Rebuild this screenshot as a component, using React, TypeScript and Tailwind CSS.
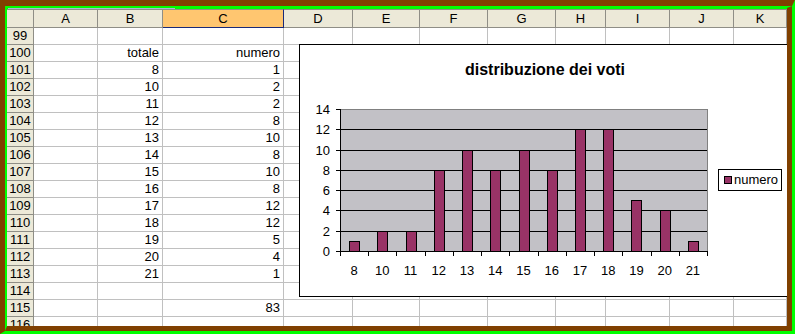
import React from 'react';

const COLS = ['A', 'B', 'C', 'D', 'E', 'F', 'G', 'H', 'I', 'J', 'K'];

const VALUES: [number, number][] = [
  [8, 1], [10, 2], [11, 2], [12, 8], [13, 10], [14, 8], [15, 10],
  [16, 8], [17, 12], [18, 12], [19, 5], [20, 4], [21, 1],
];

const DATA: Record<number, [string, string]> = { 100: ['totale', 'numero'], 115: ['', '83'] };
VALUES.forEach(([t, n], i) => {
  DATA[101 + i] = [String(t), String(n)];
});

const ROWS = Array.from({ length: 18 }, (_, i) => 99 + i);

const GRID =
  'grid grid-cols-[27px_64px_65px_121px_69px_67px_68px_68px_50px_64px_64px_53px]';

function Chart() {
  const L = 40;
  const R = 407;
  const T = 64;
  const B = 206;
  const cw = (R - L) / 13;
  const yOf = (v: number) => B - (v * (B - T)) / 14;
  const px = (v: number) => Math.round(v) + 0.5;
  const ticks = [0, 2, 4, 6, 8, 10, 12, 14];
  return (
    <div className="absolute left-[292px] top-[36px] w-[492px] h-[253px] border border-black bg-white">
      <div className="absolute top-[15px] inset-x-0 text-center text-[16px] font-bold leading-[19px] text-black">
        distribuzione dei voti
      </div>
      <svg className="absolute left-0 top-0" width="490" height="251" fontFamily="Liberation Sans, Arial, sans-serif" fontSize="13">
        <rect x={L} y={T} width={R - L} height={B - T} fill="#c2c1c6" />
        <line x1={L} y1={T + 0.5} x2={R + 0.5} y2={T + 0.5} stroke="#808080" />
        <line x1={R + 0.5} y1={T} x2={R + 0.5} y2={B} stroke="#808080" />
        {ticks.slice(1, -1).map((v) => (
          <line key={v} x1={L} y1={px(yOf(v))} x2={R} y2={px(yOf(v))} stroke="#000" />
        ))}
        {VALUES.map(([, n], i) => {
          const c = L + (i + 0.5) * cw;
          const x = Math.round(c - 5) + 0.5;
          const y = px(yOf(n));
          return (
            <rect key={i} x={x} y={y} width={10} height={B + 0.5 - y} fill="#993366" stroke="#000" />
          );
        })}
        <line x1={L + 0.5} y1={T} x2={L + 0.5} y2={B + 1} stroke="#000" />
        <line x1={L} y1={B + 0.5} x2={R + 1} y2={B + 0.5} stroke="#000" />
        {ticks.map((v) => (
          <g key={v}>
            <line x1={L - 4} y1={px(yOf(v))} x2={L} y2={px(yOf(v))} stroke="#000" />
            <text x={30} y={Math.round(yOf(v)) + 5} textAnchor="end" fill="#000">
              {v}
            </text>
          </g>
        ))}
        {Array.from({ length: 14 }, (_, i) => (
          <line key={i} x1={px(L + i * cw)} y1={B} x2={px(L + i * cw)} y2={B + 5} stroke="#000" />
        ))}
        {VALUES.map(([t], i) => (
          <text key={i} x={L + (i + 0.5) * cw} y={230} textAnchor="middle" fill="#000">
            {t}
          </text>
        ))}
      </svg>
      <div className="absolute left-[418px] top-[124px] w-[64px] h-[22px] border border-black bg-white flex items-center pl-[5px] gap-[2px]">
        <div className="w-[8px] h-[8px] border border-black bg-[#993366]" />
        <span className="text-[13px] leading-[16px] text-black">numero</span>
      </div>
    </div>
  );
}

export default function App() {
  return (
    <div className="w-[795px] h-[334px] border-t-[6px] border-l-[5px] border-r-[3px] border-b-[3px] border-t-[#804000] border-l-[#804000] border-r-[#00ff00] border-b-[#00ff00] font-['Liberation_Sans',Arial,sans-serif] text-black">
      <div className="w-full h-full border-t-2 border-l-2 border-r-[5px] border-b-[5px] border-t-[#00ff00] border-l-[#00ff00] border-r-[#804000] border-b-[#804000]">
        <div className="relative w-full h-full overflow-hidden bg-white">
          <div className="h-px bg-[#00ff00]">
            <div className="ml-px w-[167px] h-px bg-[#a8bcd6]" />
          </div>
          <div className={GRID}>
            <div className="h-[19px] bg-[#ece9d8] border-t border-b border-r border-[#8f8e86]" />
            {COLS.map((c) =>
              c === 'C' ? (
                <div
                  key={c}
                  className="h-[19px] bg-[#ffc670] border-t border-t-[#8f8e86] border-b border-r border-b-[#1a2a78] border-r-[#1a2a78] text-center text-[13px] leading-[17px]"
                >
                  {c}
                </div>
              ) : (
                <div
                  key={c}
                  className="h-[19px] bg-[#ece9d8] border-t border-b border-r border-[#8f8e86] text-center text-[13px] leading-[17px]"
                >
                  {c}
                </div>
              )
            )}
            {ROWS.map((r) => {
              const d = DATA[r];
              return (
                <React.Fragment key={r}>
                  <div className="h-[17px] bg-[#ece9d8] border-r border-b border-[#8f8e86] text-center text-[13px] leading-[16px]">
                    {r}
                  </div>
                  {COLS.map((c, ci) => (
                    <div
                      key={c}
                      className="h-[17px] border-r border-b border-[#c0c0c0] text-right pr-[3px] text-[13px] leading-[16px] whitespace-nowrap overflow-hidden"
                    >
                      {d && ci === 1 ? d[0] : d && ci === 2 ? d[1] : ''}
                    </div>
                  ))}
                </React.Fragment>
              );
            })}
          </div>
          <Chart />
        </div>
      </div>
    </div>
  );
}
